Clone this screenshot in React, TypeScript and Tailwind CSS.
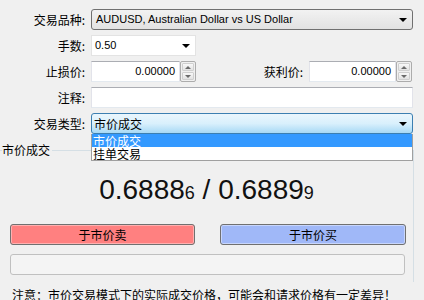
import React from "react";

const cjk = { fontFamily: '"Noto Sans CJK SC", "Noto Sans", sans-serif' };
const lat = { fontFamily: '"Liberation Sans", "Noto Sans CJK SC", sans-serif' };

function DownArrow() {
  return <div className="w-0 h-0 border-x-[4px] border-x-transparent border-t-[4px] border-t-black" />;
}

function Spinner() {
  return (
    <div className="flex flex-col w-[16px] h-[21px] border border-[#acacac] rounded-[2px] bg-[#f0f0f0] p-[1px] gap-[1px]">
      <div className="flex-1 flex items-center justify-center rounded-[1px] border border-[#cfcfcf] bg-gradient-to-b from-[#f8f8f8] to-[#e2e2e2]">
        <div className="w-0 h-0 border-x-[3px] border-x-transparent border-b-[3px] border-b-[#6a6a6a]" />
      </div>
      <div className="flex-1 flex items-center justify-center rounded-[1px] border border-[#cfcfcf] bg-gradient-to-b from-[#f8f8f8] to-[#e2e2e2]">
        <div className="w-0 h-0 border-x-[3px] border-x-transparent border-t-[3px] border-t-[#6a6a6a]" />
      </div>
    </div>
  );
}

function Label({ text, w = "w-[85px]" }: { text: string; w?: string }) {
  return (
    <div className={`${w} shrink-0 text-right text-[12px] leading-[21px] text-black`} style={cjk}>
      {text}:
    </div>
  );
}

export default function App() {
  return (
    <div className="relative w-[424px] h-[300px] overflow-hidden bg-[#f0f0f0] text-black">
      <div className="flex flex-col pt-[9px] gap-[5px]">
        {/* Row 1 */}
        <div className="flex items-center h-[21px] gap-[6px]">
          <Label text="交易品种" />
          <div className="flex items-center w-[322px] h-[21px] border border-[#707070] rounded-[3px] bg-gradient-to-b from-[#f2f2f2] to-[#e2e2e2] pl-[4px] pr-[5px]">
            <div className="flex-1 text-[11px]" style={lat}>AUDUSD, Australian Dollar vs US Dollar</div>
            <DownArrow />
          </div>
        </div>
        {/* Row 2 */}
        <div className="flex items-center h-[21px] gap-[6px]">
          <Label text="手数" />
          <div className="flex items-center w-[105px] h-[21px] border border-[#e3e3e3] bg-white pl-[3px] pr-[5px]">
            <div className="flex-1 text-[11px]" style={lat}>0.50</div>
            <DownArrow />
          </div>
        </div>
        {/* Row 3 */}
        <div className="flex items-center h-[21px]">
          <div className="flex items-center gap-[6px]">
            <Label text="止损价" />
            <div className="flex items-center">
              <div className="w-[89px] h-[21px] border border-[#abadb3] border-x-[#e2e3ea] border-b-[#e3e9ef] bg-white text-right pr-[4px] text-[11px] leading-[19px]" style={lat}>0.00000</div>
              <Spinner />
            </div>
          </div>
          <div className="flex items-center gap-[6px]">
            <Label text="获利价" w="w-[107px]" />
            <div className="flex items-center">
              <div className="w-[87px] h-[21px] border border-[#abadb3] border-x-[#e2e3ea] border-b-[#e3e9ef] bg-white text-right pr-[4px] text-[11px] leading-[19px]" style={lat}>0.00000</div>
              <Spinner />
            </div>
          </div>
        </div>
        {/* Row 4 */}
        <div className="flex items-center h-[21px] gap-[6px]">
          <Label text="注释" />
          <div className="w-[322px] h-[21px] border border-[#abadb3] border-x-[#e2e3ea] border-b-[#e3e9ef] bg-white" />
        </div>
        {/* Row 5 */}
        <div className="flex items-center h-[21px] gap-[6px]">
          <Label text="交易类型" />
          <div className="flex items-center w-[322px] h-[21px] border border-[#3c7fb1] rounded-[3px] bg-gradient-to-b from-[#eaf6fd] via-[#d9f0fc] to-[#a7d9f5] pl-[2px] pr-[5px]">
            <div className="flex-1 text-[12px] leading-[19px]" style={cjk}>市价成交</div>
            <DownArrow />
          </div>
        </div>
      </div>

      {/* Group box */}
      <div className="relative mt-[16px] w-[414px] border-t border-r border-[#d5dfe5] h-[132px]">
        <div className="absolute -top-[9px] left-[2px] pr-[2px] bg-[#f0f0f0] text-[12px] leading-[16px]" style={cjk}>市价成交</div>
        <div className="flex items-baseline justify-center h-[64px] pt-[25px] leading-none text-[#111]" style={lat}>
          <span className="text-[28px]">0.6888</span>
          <span className="text-[18px]">6</span>
          <span className="text-[28px] whitespace-pre"> / </span>
          <span className="text-[28px]">0.6889</span>
          <span className="text-[18px]">9</span>
        </div>
        <div className="flex gap-[25px] pl-[10px] mt-[9px]">
          <div className="w-[185px] h-[21px] rounded-[3px] border border-[#707070] bg-[#ff8080] shadow-[inset_0_0_0_1px_#ffb0b0] flex items-center justify-center text-[12px]" style={cjk}>于市价卖</div>
          <div className="w-[186px] h-[21px] rounded-[3px] border border-[#707070] bg-[#a0b8f8] shadow-[inset_0_0_0_1px_#c8d6fc] flex items-center justify-center text-[12px]" style={cjk}>于市价买</div>
        </div>
        <div className="ml-[10px] mt-[9px] w-[395px] h-[21px] rounded-[3px] border border-[#c0c0c0] bg-[#f4f4f4]" />
      </div>

      <div className="pl-[12px] pt-[5px] text-[12px] leading-[16px] whitespace-nowrap" style={cjk}>
        注意：市价交易模式下的实际成交价格，可能会和请求价格有一定差异！
      </div>

      {/* Dropdown list overlay */}
      <div className="absolute left-[91px] top-[134px] w-[322px] h-[27px] bg-white border border-[#a0a0a0] border-t-0 flex flex-col text-[12px] leading-[13px]" style={cjk}>
        <div className="h-[13px] bg-[#3399ff] text-white pl-[1px] overflow-hidden">市价成交</div>
        <div className="h-[13px] pl-[1px] overflow-hidden">挂单交易</div>
      </div>
    </div>
  );
}
